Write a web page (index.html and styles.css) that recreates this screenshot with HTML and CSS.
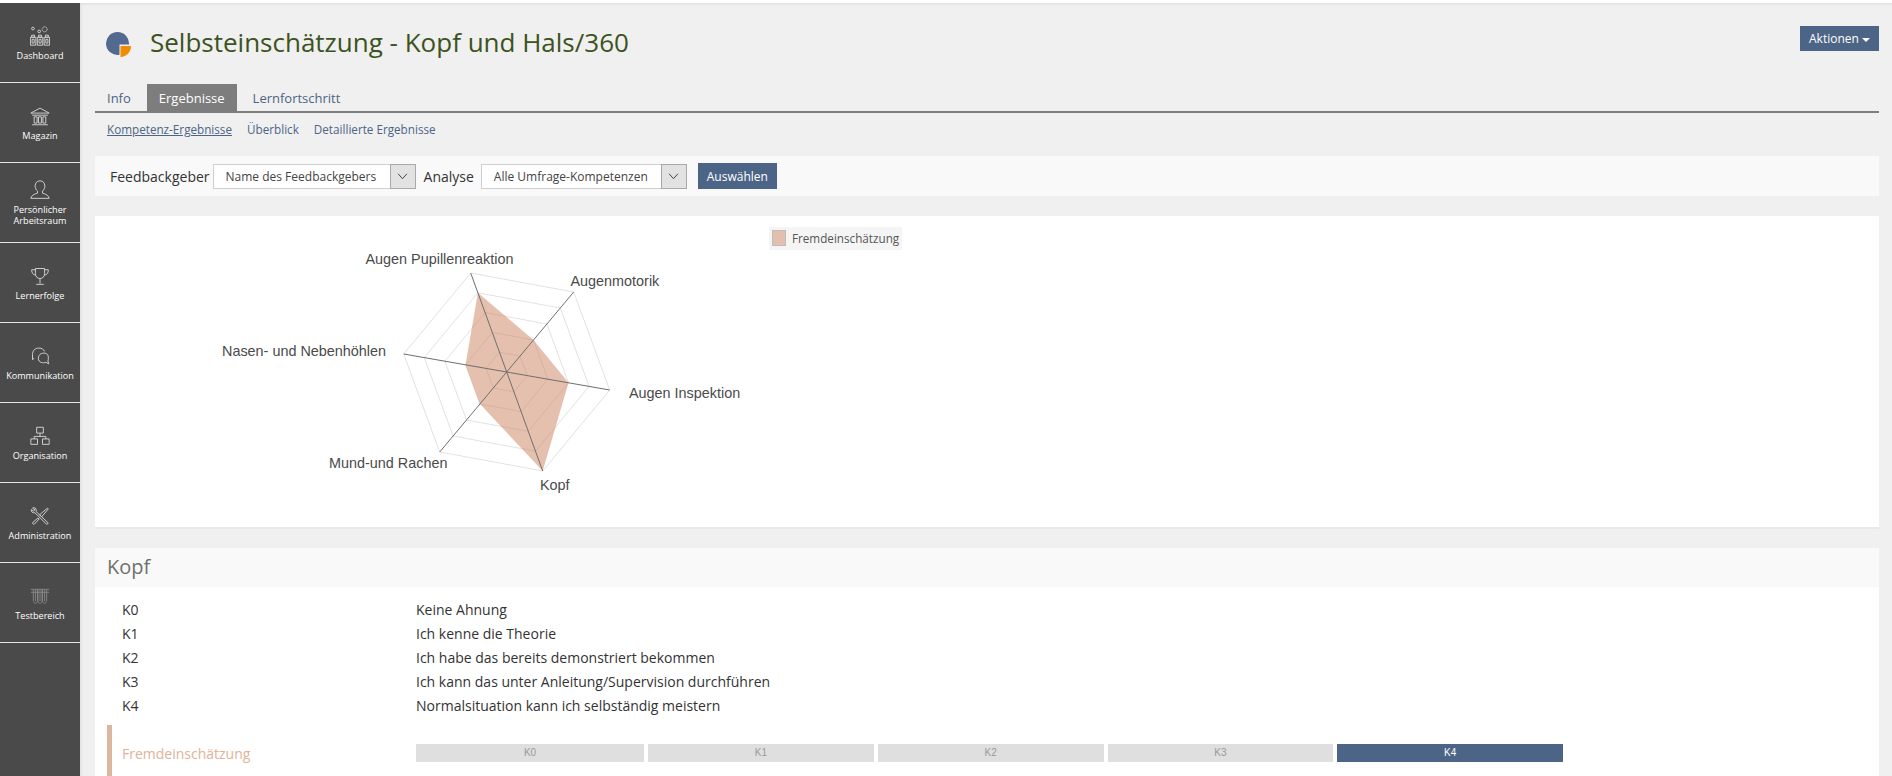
FILE: index.html
```html
<!DOCTYPE html>
<html lang="de">
<head>
<meta charset="utf-8">
<title>Selbsteinschätzung - Kopf und Hals/360</title>
<link rel="stylesheet" href="styles.css">
</head>
<body>
<div class="app">
  <nav class="sidebar">
    <a class="nav-item">
      <svg class="nav-icon" viewBox="0 0 24 24"><circle cx="3.500" cy="3" r="1.600"/><circle cx="11" cy="6.500" r="1.600"/><circle cx="17.500" cy="4" r="3" stroke-dasharray="1.500 .7"/><path d="M.5 13.500h6.500v9.500h-6.500zM8.800 13.500h6.500v9.500h-6.500zM17 13.500h6.500v9.500h-6.500zM2 11h3.500v2.500h-3.500zM10.200 11h3.500v2.500h-3.500zM18.500 11h3.500v2.500h-3.500zM2.500 16h2.500v4.500h-2.500zM10.800 16h2.500v4.500h-2.500zM19 16h2.500v4.500h-2.500z"/></svg>
      <span class="nav-label">Dashboard</span>
    </a>
    <a class="nav-item">
      <svg class="nav-icon" viewBox="0 0 24 24"><path d="M1 8.500 12 2.500l11 6zM2.500 11h19M2.500 22.500h19M5 13h3.500v7.500h-3.500zM10.200 13h3.500v7.500h-3.500zM15.500 13h3.500v7.500h-3.500z"/></svg>
      <span class="nav-label">Magazin</span>
    </a>
    <a class="nav-item">
      <svg class="nav-icon" viewBox="0 0 24 24"><path d="M12 1c-3.800 0-5.800 2.800-5.800 6 0 2.800 1.100 5 2.800 6.300v2.500c-3.200 1.200-7.400 2-8 6.200h22c-.6-4.200-4.800-5-8-6.200v-2.500c1.700-1.300 2.800-3.500 2.800-6.300 0-3.200-2-6-5.800-6z"/></svg>
      <span class="nav-label">Persönlicher Arbeitsraum</span>
    </a>
    <a class="nav-item">
      <svg class="nav-icon" viewBox="0 0 24 24"><path d="M6.500 3h11v6c0 4-2.500 6-5.500 6s-5.500-2-5.500-6zM6.500 4.500h-4.500c0 4 1.500 6 5 6.500M17.500 4.500h4.500c0 4-1.500 6-5 6.500M12 15v6M7.500 22h9"/></svg>
      <span class="nav-label">Lernerfolge</span>
    </a>
    <a class="nav-item">
      <svg class="nav-icon" viewBox="0 0 24 24"><path d="M5 14.500 3 16.500v-6c0-5 3-8 7.500-8 3.500 0 6 1.500 7 4M13.500 9c5-1.500 8.500.5 8.500 4.500 0 2 0 3.500-.5 4.500l1 3.500-3.500-2c-3 1.500-9 .5-9-4.500 0-3 1.500-5 3.500-6z"/></svg>
      <span class="nav-label">Kommunikation</span>
    </a>
    <a class="nav-item">
      <svg class="nav-icon" viewBox="0 0 24 24"><path d="M8 1.500h8v7h-8zM12 8.500v4M5 15.500v-3h14v3M1 15.500h8v6.500h-8zM15 15.500h8v6.500h-8z"/></svg>
      <span class="nav-label">Organisation</span>
    </a>
    <a class="nav-item">
      <svg class="nav-icon" viewBox="0 0 24 24"><path d="M3 2.500c2-1.200 4.500 0 4.500 2.500 0 .6-.1 1-.3 1.500L21.500 20c.6 1.300-.7 2.400-2 1.500L5.800 8c-2.500.8-4.800-1-4.300-3.800l2.500 2 2-1.500zM21 2.500l1 1-8 9.500-2.500-2.500zM9.500 14.500 3.500 19.500c-1 1.500.5 3 2 2l5.500-6z"/></svg>
      <span class="nav-label">Administration</span>
    </a>
    <a class="nav-item nav-item-dim">
      <svg class="nav-icon" viewBox="0 0 24 24"><path d="M1 4h22M1 7.500h22M4 4v13c0 5 5 5 5 0v-13M9.500 4v13c0 5 5 5 5 0v-13M15 4v13c0 5 5 5 5 0v-13M6.500 4v14M12 4v14M17.500 4v14"/></svg>
      <span class="nav-label">Testbereich</span>
    </a>
  </nav>

  <main class="content">
    <header class="page-head">
      <div class="title-wrap">
        <svg class="title-icon" viewBox="0 0 26 26"><path class="pie" d="M11.500 0a11.500 11.500 0 1 0 2 22.830V12.500h9.500A11.500 11.500 0 0 0 11.500 0z"/><path class="wedge" d="M14.500 14h10.500c0 6-4.500 10.800-10.500 11z"/></svg>
        <h1 class="title">Selbsteinschätzung - Kopf und Hals/360</h1>
      </div>
      <button class="btn btn-actions">Aktionen <span class="caret"></span></button>
    </header>

    <ul class="tabs">
      <li class="tab">Info</li>
      <li class="tab tab-active">Ergebnisse</li>
      <li class="tab">Lernfortschritt</li>
    </ul>

    <ul class="subtabs">
      <li class="subtab subtab-active">Kompetenz-Ergebnisse</li>
      <li class="subtab">Überblick</li>
      <li class="subtab">Detaillierte Ergebnisse</li>
    </ul>

    <form class="toolbar">
      <span class="tool-label">Feedbackgeber</span>
      <div class="select select-a"><span class="select-text">Name des Feedbackgebers</span><span class="select-arrow"><svg viewBox="0 0 10 6"><path d="M1 .5 5 5l4-4.500"/></svg></span></div>
      <span class="tool-label tool-label-b">Analyse</span>
      <div class="select select-b"><span class="select-text">Alle Umfrage-Kompetenzen</span><span class="select-arrow"><svg viewBox="0 0 10 6"><path d="M1 .5 5 5l4-4.500"/></svg></span></div>
      <button class="btn btn-select" type="button">Auswählen</button>
    </form>

    <section class="chart-panel">
      <svg class="chart" viewBox="95 216 1784 311">
        <g class="rings">
          <polygon points="470.700,273 573.700,292 609.700,390 542.700,471 439.700,452 403.700,354"/>
          <polygon points="477.900,292.800 560.300,308 589.100,386.400 535.500,451.200 453.100,436 424.300,357.600"/>
          <polygon points="485.100,312.600 546.900,324 568.500,382.800 528.300,431.400 466.500,420 444.900,361.200"/>
          <polygon points="492.300,332.400 533.500,340 547.900,379.200 521.100,411.600 479.900,404 465.500,364.800"/>
          <polygon points="499.500,352.200 520.100,356 527.300,375.600 513.900,391.800 493.300,388 486.100,368.400"/>
        </g>
        <polygon class="area" points="477.900,292.800 533.500,340 568.500,382.800 542.700,471 479.900,404 465.500,364.800"/>
        <g class="axes">
          <line x1="506.700" y1="372" x2="470.700" y2="273"/>
          <line x1="506.700" y1="372" x2="573.700" y2="292"/>
          <line x1="506.700" y1="372" x2="609.700" y2="390"/>
          <line x1="506.700" y1="372" x2="542.700" y2="471"/>
          <line x1="506.700" y1="372" x2="439.700" y2="452"/>
          <line x1="506.700" y1="372" x2="403.700" y2="354"/>
        </g>
        <g class="axis-labels">
          <text x="365.500" y="264">Augen Pupillenreaktion</text>
          <text x="570.500" y="286">Augenmotorik</text>
          <text x="629" y="398">Augen Inspektion</text>
          <text x="540" y="490">Kopf</text>
          <text x="329" y="468">Mund-und Rachen</text>
          <text x="222" y="356">Nasen- und Nebenhöhlen</text>
        </g>
        <rect class="legend-bg" x="769" y="227" width="133" height="23"/>
        <rect class="legend-swatch" x="772.500" y="230.500" width="13" height="15"/>
        <text class="legend-text" x="792" y="243">Fremdeinschätzung</text>
      </svg>
    </section>

    <section class="skill-panel">
      <h2 class="skill-head">Kopf</h2>
      <div class="skill-body">
        <dl class="levels">
          <dt>K0</dt><dd>Keine Ahnung</dd>
          <dt>K1</dt><dd>Ich kenne die Theorie</dd>
          <dt>K2</dt><dd>Ich habe das bereits demonstriert bekommen</dd>
          <dt>K3</dt><dd>Ich kann das unter Anleitung/Supervision durchführen</dd>
          <dt>K4</dt><dd>Normalsituation kann ich selbständig meistern</dd>
        </dl>
        <div class="rating">
          <span class="rating-label">Fremdeinschätzung</span>
          <div class="scale">
            <span class="step">K0</span>
            <span class="step">K1</span>
            <span class="step">K2</span>
            <span class="step">K3</span>
            <span class="step step-on">K4</span>
          </div>
        </div>
      </div>
    </section>
  </main>
</div>
</body>
</html>
```
FILE: styles.css
```css
* { box-sizing: border-box; }
html, body { margin: 0; height: 776px; overflow: hidden; }
body { background: #fff; font-family: "Open Sans", "Noto Sans", sans-serif; color: #333; }

.app { display: flex; height: 776px; padding-top: 3px; }

.sidebar { flex: 0 0 80px; background: #4a4a4a; display: flex; flex-direction: column; }
.nav-item { height: 80px; border-bottom: 1px solid #e4e4e4; display: flex; flex-direction: column; align-items: center; justify-content: center; color: #fff; }
.nav-icon { width: 20px; height: 20px; margin: 1px 0 4px; fill: none; stroke: #d2d2d2; stroke-width: 1.150; }
.nav-item-dim .nav-icon { stroke: #8d8d8d; stroke-width: 1; }
.nav-label { font-size: 9.100px; line-height: 11px; text-align: center; width: 70px; }

.content { flex: 1; min-width: 0; background: #f0f0f0; padding: 0 13px 0 15px; box-shadow: inset 2px 2px 3px -1px #dcdcdc; }

.page-head { height: 81px; display: flex; justify-content: space-between; align-items: flex-start; padding-top: 23px; }
.title-wrap { display: flex; align-items: center; padding-left: 11px; gap: 18px; }
.title-icon { width: 26px; height: 26px; flex: none; margin-top: 6px; }
.pie { fill: #53698f; }
.wedge { fill: #f08c00; }
.title { margin: 0; font-size: 26px; line-height: 32px; font-weight: 400; color: #3c5320; }

.btn { border: 0; background: #4c6586; color: #fff; font-family: inherit; font-size: 12px; padding: 0; }
.btn-actions { width: 79px; height: 25px; }
.caret { display: inline-block; width: 0; height: 0; border: 4px solid transparent; border-top-color: #fff; border-bottom-width: 0; vertical-align: middle; }

.tabs { list-style: none; margin: 0; padding: 0; height: 29px; display: flex; gap: 4px; border-bottom: 2px solid #7d7d7d; }
.tab { height: 27px; font-size: 13px; line-height: 29px; padding: 0 12px; color: #4c6586; }
.tab-active { background: #7d7d7d; color: #fff; }

.subtabs { list-style: none; margin: 0; padding: 0 0 12px 12px; height: 43px; display: flex; gap: 15px; align-items: center; font-size: 11.700px; color: #4c6586; }
.subtab-active { text-decoration: underline; }

.toolbar { height: 40px; background: #f9f9f9; display: flex; align-items: center; padding-left: 15px; }
.tool-label { font-size: 14px; color: #333; margin-right: 3px; }
.tool-label-b { margin-left: 8px; margin-right: 7px; }
.select { height: 25px; background: #fff; border: 1px solid #cfcfcf; display: flex; justify-content: space-between; font-size: 12px; color: #444; }
.select-a { width: 203px; }
.select-b { width: 206px; }
.select-text { line-height: 24px; padding-left: 12px; }
.select-arrow { width: 26px; background: #e2e2e2; border: 1px solid #a9a9a9; margin: -1px -1px -1px 0; display: flex; align-items: center; justify-content: center; }
.select-arrow svg { width: 11px; height: 7px; fill: none; stroke: #444; stroke-width: .9; }
.btn-select { width: 79px; height: 26px; margin-left: 11px; }

.chart-panel { margin-top: 20px; height: 313px; background: #fff; border-bottom: 2px solid #e9e9e9; }
.chart { display: block; width: 1784px; height: 311px; }
.rings polygon { fill: none; stroke: #e2e2e2; stroke-width: 1; }
.area { fill: rgba(208, 135, 100, .52); }
.axes line { stroke: #6f6f6f; stroke-width: 1; }
.axis-labels text { font-family: "Liberation Sans", Arial, sans-serif; font-size: 14.400px; fill: #4a4a4a; }
.legend-bg { fill: #f5f5f5; }
.legend-swatch { fill: #e3bfae; stroke: #bdbdbd; stroke-width: 1; }
.legend-text { font-family: "Open Sans", sans-serif; font-size: 11.700px; fill: #555; }

.skill-panel { margin-top: 19px; background: #fff; height: 240px; }
.skill-head { margin: 0; height: 39px; background: #f9f9f9; padding-left: 12px; font-size: 20px; line-height: 38px; font-weight: 400; color: #6f6f6f; }
.skill-body { padding: 11px 0 0 12px; }
.levels { margin: 0 0 0 15px; display: grid; grid-template-columns: 294px 1fr; grid-auto-rows: 24px; font-size: 14px; line-height: 24px; color: #333; }
.levels dd { margin: 0; }
.rating { margin-top: 7px; border-left: 5px solid #dcb79f; height: 60px; padding: 19px 316px 0 10px; display: flex; }
.rating-label { flex: 0 0 294px; font-size: 14px; line-height: 20px; color: #e0b398; }
.scale { flex: 1; display: grid; grid-template-columns: 228px repeat(4, 1fr); gap: 4px; height: 18px; }
.step { background: #dfdfdf; color: #999; font-family: "Liberation Sans", Arial, sans-serif; font-size: 10px; line-height: 18px; text-align: center; }
.step-on { background: #4c6586; color: #fff; }
```
